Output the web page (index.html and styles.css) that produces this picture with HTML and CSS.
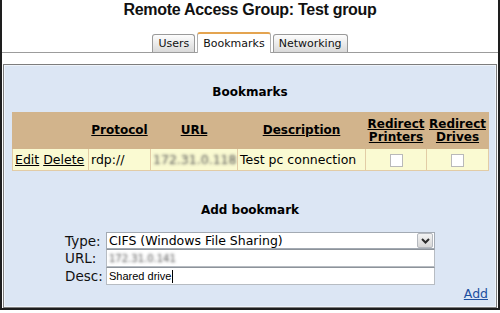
FILE: index.html
```html
<!DOCTYPE html>
<html>
<head>
  <title>Remote Access Group</title>
  <link rel="stylesheet" href="styles.css">
</head>
<body>
  <div class="frame">
    <h1 class="page-title">Remote Access Group:&nbsp;Test group</h1>

    <div class="tabs">
      <span class="tab">Users</span>
      <span class="tab tab-active">Bookmarks</span>
      <span class="tab">Networking</span>
    </div>

    <div class="panel">
      <h2 class="section-title">Bookmarks</h2>
      <table class="bm-table">
        <colgroup>
          <col class="c-actions">
          <col class="c-proto">
          <col class="c-url">
          <col class="c-desc">
          <col class="c-printers">
          <col class="c-drives">
        </colgroup>
        <tr>
          <th></th>
          <th><a href="#">Protocol</a></th>
          <th><a href="#">URL</a></th>
          <th><a href="#">Description</a></th>
          <th><a href="#">Redirect Printers</a></th>
          <th><a href="#">Redirect Drives</a></th>
        </tr>
        <tr>
          <td><a href="#">Edit</a> <a href="#">Delete</a></td>
          <td>rdp://</td>
          <td><span class="blurred">172.31.0.118</span></td>
          <td>Test pc connection</td>
          <td class="center"><span class="checkbox"></span></td>
          <td class="center"><span class="checkbox"></span></td>
        </tr>
      </table>

      <h2 class="section-title add-title">Add bookmark</h2>
      <table class="add-form">
        <tr>
          <td class="label">Type:</td>
          <td>
            <div class="select">
              <span class="select-text">CIFS (Windows File Sharing)</span>
              <span class="select-btn">
                <svg width="9" height="6" viewBox="0 0 9 6"><polyline points="1,1 4.5,4.5 8,1" fill="none" stroke="#2b2b2b" stroke-width="2"/></svg>
              </span>
            </div>
          </td>
        </tr>
        <tr>
          <td class="label">URL:</td>
          <td><div class="text-input"><span class="blurred small">172.31.0.141</span></div></td>
        </tr>
        <tr>
          <td class="label">Desc:</td>
          <td><div class="text-input"><span class="typed">Shared drive</span><span class="caret"></span></div></td>
        </tr>
      </table>

      <div class="add-row"><a href="#" class="add-link">Add</a></div>
    </div>
  </div>
</body>
</html>
```

FILE: styles.css
```css
body {
  margin: 0;
  background-color: #fff;
  font-family: "DejaVu Sans", Verdana, sans-serif;
  color: #000;
}

.frame {
  width: 500px;
  height: 310px;
  box-sizing: border-box;
  border: 2px solid #1e1e1e;
  border-top: none;
}

.page-title {
  margin: 0;
  font: bold 16px/20px "Liberation Sans", Arial, sans-serif;
  letter-spacing: -0.3px;
  text-align: center;
  color: #111;
}

/* Вкладки */
.tabs {
  display: flex;
  justify-content: center;
  align-items: flex-end;
  gap: 2px;
  margin-top: 12px;
  border-bottom: 1px solid #9c9c9c;
}

.tab {
  height: 17px;
  padding: 0 5px;
  border: 1px solid #9a9a9a;
  border-bottom: none;
  border-radius: 3px 3px 0 0;
  background: linear-gradient(#fdfdfd, #d9d9d9);
  font-size: 11px;
  line-height: 17px;
  color: #111;
}

.tab-active {
  height: 19px;
  line-height: 20px;
  margin-bottom: -1px;
  border-top: 2px solid #e4a450;
  border-left-color: #b0b0b0;
  border-right-color: #b0b0b0;
  background: #fff;
}

/* Панель с содержимым */
.panel {
  height: 244px;
  box-sizing: border-box;
  margin: 11px 1px 0;
  padding: 0 8px;
  border: 1px solid #7d7d7d;
  box-shadow: inset 0 0 0 1px #eef3fa;
  background-color: #dce6f4;
}

.section-title {
  margin: 20px 0 12px;
  font-size: 12px;
  line-height: 15px;
  text-align: center;
}

.add-title {
  margin: 32px 0 14px;
}

.bm-table {
  width: 476px;
  table-layout: fixed;
  border-collapse: collapse;
  font-size: 12.5px;
}

.c-actions { width: 76px; }
.c-proto { width: 62px; }
.c-url { width: 87px; }
.c-desc { width: 128px; }
.c-printers { width: 61px; }
.c-drives { width: 62px; }

.bm-table th {
  height: 35px;
  padding: 0;
  border: 1px solid #d2b48c;
  background-color: #d2b48c;
  font-size: 12px;
  line-height: 13px;
  vertical-align: middle;
}

.bm-table td {
  height: 21px;
  padding: 0 2px;
  border: 1px solid #e2cca6;
  background-color: #fafad2;
  white-space: nowrap;
  overflow: hidden;
}

.bm-table a {
  color: #000;
  text-decoration: underline;
}

.bm-table td.center {
  text-align: center;
}

.checkbox {
  display: inline-block;
  width: 11px;
  height: 11px;
  border: 1px solid #b9b9b9;
  background-color: #fff;
  vertical-align: middle;
}

.blurred {
  color: transparent;
  text-shadow: 0 0 3px #555;
}

.blurred.small {
  font-size: 10px;
}

/* Форма добавления */
.add-form {
  width: 370px;
  margin: 0 auto;
  border-collapse: collapse;
}

.add-form td {
  padding: 0;
  vertical-align: middle;
}

.add-form .label {
  width: 41px;
  font-size: 13.5px;
  color: #111;
}

.select {
  display: flex;
  align-items: center;
  height: 15px;
  border: 1px solid #a3aab3;
  background-color: #fff;
  font-size: 12.5px;
}

.select-text {
  flex: 1;
  padding-left: 2px;
}

.select-btn {
  display: flex;
  align-items: center;
  justify-content: center;
  width: 14px;
  height: 13px;
  margin-right: 1px;
  border: 1px solid #b5b9bf;
  border-radius: 2px;
  background: linear-gradient(#f3f3f3, #d7d7d7);
}

.text-input {
  display: flex;
  align-items: center;
  height: 16px;
  padding-left: 2px;
  border: 1px solid #b7bcc2;
  border-top-color: #8d939a;
  background-color: #fff;
}

.typed {
  font: 11px "Liberation Sans", Arial, sans-serif;
}

.caret {
  display: inline-block;
  width: 1px;
  height: 13px;
  margin-left: 1px;
  background-color: #000;
}

.add-row {
  margin-top: 1px;
  text-align: right;
  font-size: 12.5px;
  line-height: 15px;
}

.add-link {
  color: #1b4ea0;
  text-decoration: underline;
}
```
